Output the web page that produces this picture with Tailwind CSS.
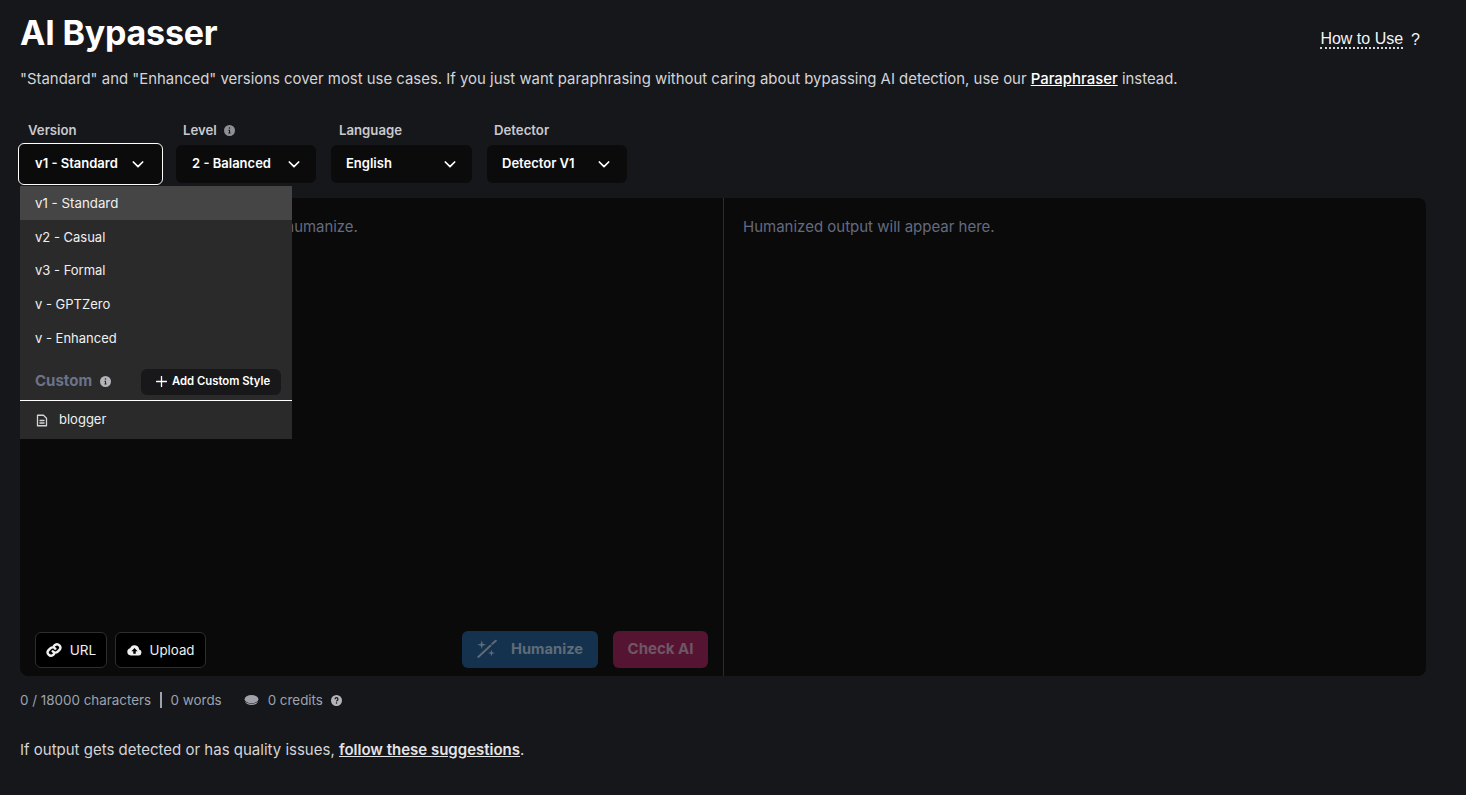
<!DOCTYPE html>
<html lang="en">
<head>
    <meta charset="UTF-8">
    <title>AI Bypasser</title>
    <script src="https://cdn.jsdelivr.net/npm/@tailwindcss/browser@4"></script>
</head>
<body class="bg-[#16171a] text-white font-['Inter',sans-serif] h-[795px] overflow-hidden">
    <div class="pl-5 pr-10 relative">

        <!-- Header -->
        <div class="flex justify-between items-start h-[69px] pt-[13px]">
            <h1 class="text-[34px] leading-10 font-bold tracking-[-0.2px]">AI Bypasser</h1>
            <div class="flex items-center gap-2 text-[16px] font-['Liberation_Sans',sans-serif] mt-[15px] mr-[6px] text-[#f3f4f6]">
                <span class="border-b-2 border-dotted border-gray-300 leading-[16px]">How to Use</span>
                <span class="font-medium">?</span>
            </div>
        </div>
        <p class="text-[14.92px] leading-5 text-[#d4d4d8]">"Standard" and "Enhanced" versions cover most use cases. If you just want paraphrasing without caring about bypassing AI detection, use our <a class="underline text-white font-medium">Paraphraser</a> instead.</p>

        <!-- Selects -->
        <div class="flex mt-[29px] -ml-[2px] h-[66px] relative">
            <div class="w-[158px]">
                <div class="h-[25px] pl-[10px] text-[13.2px] font-semibold text-[#c9c9cf] flex items-center">Version</div>
                <button class="w-[145px] h-[42px] bg-[#0b0b0c] border border-white rounded-md flex items-center justify-between pl-4 pr-[16px] text-[13px] font-semibold">
                    v1 - Standard
                    <svg class="w-4 h-4" viewBox="0 0 24 24" fill="none" stroke="currentColor" stroke-width="2.6" stroke-linecap="round" stroke-linejoin="round"><path d="M5 9l7 7 7-7"/></svg>
                </button>
            </div>
            <div class="w-[155px]">
                <div class="h-[25px] pl-[7px] text-[13.2px] font-semibold text-[#c9c9cf] flex items-center gap-[7px]">Level
                    <svg class="w-[11px] h-[11px] -mt-[1px] text-[#8f8f95]" viewBox="0 0 16 16" fill="currentColor"><path d="M8 0a8 8 0 100 16A8 8 0 008 0zm0 3.200a1.200 1.200 0 110 2.400 1.200 1.200 0 010-2.400zM9.600 12.500H6.400V11h.9V8.200h-.9V6.800h2.400V11h.8z"/></svg>
                </div>
                <button class="w-[140px] h-[38px] mt-[2px] bg-[#0b0b0c] rounded-md flex items-center justify-between pl-4 pr-[14px] text-[13px] font-semibold">
                    2 - Balanced
                    <svg class="w-4 h-4" viewBox="0 0 24 24" fill="none" stroke="currentColor" stroke-width="2.6" stroke-linecap="round" stroke-linejoin="round"><path d="M5 9l7 7 7-7"/></svg>
                </button>
            </div>
            <div class="w-[156px]">
                <div class="h-[25px] pl-[8px] text-[13.2px] font-semibold text-[#c9c9cf] flex items-center">Language</div>
                <button class="w-[141px] h-[38px] mt-[2px] bg-[#0b0b0c] rounded-md flex items-center justify-between pl-[15px] pr-[14px] text-[13px] font-semibold">
                    English
                    <svg class="w-4 h-4" viewBox="0 0 24 24" fill="none" stroke="currentColor" stroke-width="2.6" stroke-linecap="round" stroke-linejoin="round"><path d="M5 9l7 7 7-7"/></svg>
                </button>
            </div>
            <div class="w-[141px]">
                <div class="h-[25px] pl-[7px] text-[13.2px] font-semibold text-[#c9c9cf] flex items-center">Detector</div>
                <button class="w-[140px] h-[38px] mt-[2px] bg-[#0b0b0c] rounded-md flex items-center justify-between pl-[15px] pr-[15px] text-[13px] font-semibold">
                    Detector V1
                    <svg class="w-4 h-4" viewBox="0 0 24 24" fill="none" stroke="currentColor" stroke-width="2.6" stroke-linecap="round" stroke-linejoin="round"><path d="M5 9l7 7 7-7"/></svg>
                </button>
            </div>

            <!-- Version menu -->
            <div class="absolute left-[2px] top-[68px] w-[272px] bg-[#2a2a2b] text-[13px] text-[#f0f0f0] z-10">
                <div class="h-[34px] pl-[15px] pt-[1px] flex items-center bg-[#454545] text-[13.3px]">v1 - Standard</div>
                <div class="h-[34px] pl-[15px] pt-[1px] flex items-center">v2 - Casual</div>
                <div class="h-[33px] pl-[15px] flex items-center">v3 - Formal</div>
                <div class="h-[34px] pl-[15px] pt-[1px] flex items-center">v - GPTZero</div>
                <div class="h-[34px] pl-[15px] pt-[1px] flex items-center">v - Enhanced</div>
                <div class="h-[46px] pl-[15px] pr-[11px] pt-[8px] flex items-center justify-between border-b border-white">
                    <div class="flex items-center gap-2 text-[15px] font-bold text-[#6b7389]">Custom
                        <svg class="w-[11px] h-[11px] text-[#b4b4ba]" viewBox="0 0 16 16" fill="currentColor"><path d="M8 0a8 8 0 100 16A8 8 0 008 0zm0 3.200a1.200 1.200 0 110 2.400 1.200 1.200 0 010-2.400zM9.600 12.500H6.400V11h.9V8.200h-.9V6.800h2.400V11h.8z"/></svg>
                    </div>
                    <button class="h-[26px] w-[140px] pl-[14px] bg-[#18181a] rounded-md flex items-center gap-[4px] text-[11.3px] font-semibold text-white">
                        <svg class="w-[13px] h-[13px]" viewBox="0 0 24 24" fill="none" stroke="currentColor" stroke-width="2.4"><path d="M12 2v20M2 12h20"/></svg>
                        Add Custom Style
                    </button>
                </div>
                <div class="h-[38px] pl-[16px] flex items-center gap-[11px]">
                    <svg class="w-[12px] h-[13px] text-[#d4d4d8]" viewBox="0 0 24 24" fill="none" stroke="currentColor" stroke-width="2.6" stroke-linejoin="round"><path d="M3 1.500h12l6 6V22.500H3z"/><path d="M7 12h10M7 17h10"/></svg>
                    blogger
                </div>
            </div>
        </div>

        <!-- Editor panels -->
        <div class="grid grid-cols-[704px_1fr] h-[478px] mt-[14px] bg-[#0a0a0b] rounded-lg">
            <div class="relative border-r border-[#2c2c2e] pl-[19px] pt-[19px]">
                <p class="text-[14.92px] leading-5 text-[#646b80]">Enter or paste the text you want to humanize.</p>
                <div class="absolute left-[15px] right-[15px] bottom-[8px] flex items-end justify-between">
                    <div class="flex gap-[8px]">
                        <button class="h-[36px] w-[72px] bg-black border border-[#2e2e30] rounded-md flex items-center justify-center gap-[8px] text-[13.5px] text-[#f0f0f0]">
                            <svg class="w-[16px] h-[16px]" viewBox="0 0 24 24" fill="none" stroke="currentColor" stroke-width="3.6" stroke-linecap="round"><path d="M10 14a5 5 0 007.500.5l3-3a5 5 0 00-7-7l-1.700 1.700"/><path d="M14 10a5 5 0 00-7.500-.5l-3 3a5 5 0 007 7l1.700-1.700"/></svg>
                            URL
                        </button>
                        <button class="h-[36px] w-[91px] bg-black border border-[#2e2e30] rounded-md flex items-center justify-center gap-[8px] text-[13.3px] text-[#f0f0f0]">
                            <svg class="w-[15px] h-[15px]" viewBox="0 0 24 24"><path fill="currentColor" d="M19.400 10.200A7.500 7.500 0 005 8.200 6 6 0 006 20h13a5 5 0 00.4-9.800z"/><path fill="#000" d="M12 8l5 5h-3v4h-4v-4H7z"/></svg>
                            <span class="mt-[1px]">Upload</span>
                        </button>
                    </div>
                    <div class="flex gap-[15px]">
                        <button class="h-[37px] w-[136px] bg-[#14324d] rounded-md flex items-center justify-center gap-[13px] text-[14.7px] font-bold text-[#5f6b78]">
                            <svg class="w-[21px] h-[21px]" viewBox="0 0 24 24" fill="none" stroke="currentColor" stroke-width="2.2" stroke-linecap="round"><path d="M1.500 20.500L15.500 7.500M17.500 5.500l4-3.500"/><path fill="currentColor" stroke="none" d="M5.400 1.500l1.100 3.900 3.900 1.100-3.900 1.100-1.100 3.900-1.100-3.900L.4 6.500l3.900-1.100zM16.500 12l.9 3.100 3.100.9-3.100.9-.9 3.100-.9-3.100-3.100-.9 3.100-.9z"/></svg>
                            Humanize
                        </button>
                        <button class="h-[37px] w-[95px] bg-[#551532] rounded-md text-[15px] font-bold text-[#6f5666]">Check AI</button>
                    </div>
                </div>
            </div>
            <div class="pl-[19px] pt-[19px]">
                <p class="text-[15px] leading-5 text-[#646b80]">Humanized output will appear here.</p>
            </div>
        </div>

        <!-- Counters -->
        <div class="flex items-center h-5 mt-[14px] text-[13.4px] text-[#9ca3af]">
            <span>0 / 18000 characters</span>
            <span class="w-[1.5px] h-[16px] bg-[#9ca3af] mx-[9px]"></span>
            <span>0 words</span>
            <svg class="w-[15px] h-[11px] ml-[22px] text-[#a1a1aa]" viewBox="0 0 16 12" fill="currentColor"><ellipse cx="8" cy="4.500" rx="7.500" ry="4.500"/><path d="M.5 6.500C1.500 9.500 4.500 11 8 11s6.500-1.500 7.500-4.500C14 8.500 11 9.500 8 9.500S2 8.500.5 6.500z"/></svg>
            <span class="ml-[9px]">0 credits</span>
            <svg class="w-[11px] h-[11px] ml-[8px] text-[#b4b4ba]" viewBox="0 0 16 16" fill="currentColor"><path fill-rule="evenodd" d="M8 0a8 8 0 100 16A8 8 0 008 0zM5 6a3 3 0 116 0c0 1.500-1 2-1.800 2.600-.3.2-.4.4-.4.900H7.200c0-1 .3-1.500 1-2 .6-.4 1-.7 1-1.400a1.200 1.200 0 10-2.400 0zm3 4.500a1.100 1.100 0 110 2.200 1.100 1.100 0 010-2.200z"/></svg>
        </div>

        <p class="mt-[30px] text-[15px] leading-5 text-[#d4d4d8]">If output gets detected or has quality issues, <a class="underline font-semibold text-[#e4e4e7]">follow these suggestions</a>.</p>
    </div>
</body>
</html>
